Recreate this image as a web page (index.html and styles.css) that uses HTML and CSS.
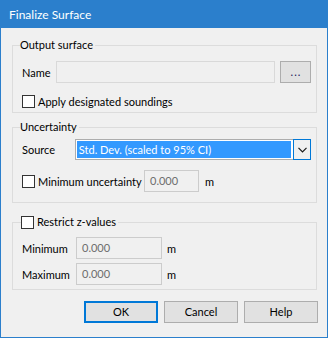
FILE: index.html
```html
<!DOCTYPE html>
<html>
<head>
<meta charset="utf-8">
<link rel="stylesheet" href="styles.css">
</head>
<body>
<div class="window">
  <div class="titlebar">Finalize Surface</div>
  <div class="content">
    <fieldset class="group group-output">
      <legend class="legend">Output surface</legend>
      <div class="row row-name">
        <span class="label label-name">Name</span>
        <div class="textbox textbox-name"></div>
        <div class="button button-browse">...</div>
      </div>
      <div class="row row-check">
        <span class="checkbox"></span>
        <span class="check-text">Apply designated soundings</span>
      </div>
    </fieldset>

    <fieldset class="group group-uncert">
      <legend class="legend">Uncertainty</legend>
      <div class="row row-source">
        <span class="label label-source">Source</span>
        <div class="combo">
          <div class="combo-text"><span class="combo-sel">Std. Dev. (scaled to 95% CI)</span></div>
          <div class="combo-btn">
            <svg width="9" height="6" viewBox="0 0 9 6"><path d="M0.5 0.8 L4.5 4.8 L8.5 0.8" fill="none" stroke="#1a1a1a" stroke-width="1.2"/></svg>
          </div>
        </div>
      </div>
      <div class="row row-minunc">
        <span class="checkbox"></span>
        <span class="check-text check-minunc">Minimum uncertainty</span>
        <div class="textbox textbox-num textbox-minunc">0.000</div>
        <span class="unit">m</span>
      </div>
    </fieldset>

    <fieldset class="group group-restrict">
      <legend class="legend legend-check">
        <span class="checkbox"></span>
        <span class="check-text">Restrict z-values</span>
      </legend>
      <div class="row row-z">
        <span class="label label-z">Minimum</span>
        <div class="textbox textbox-num textbox-z">0.000</div>
        <span class="unit unit-z">m</span>
      </div>
      <div class="row row-z row-z2">
        <span class="label label-z">Maximum</span>
        <div class="textbox textbox-num textbox-z">0.000</div>
        <span class="unit unit-z">m</span>
      </div>
    </fieldset>

    <div class="buttons">
      <div class="button button-main button-default">OK</div>
      <div class="button button-main">Cancel</div>
      <div class="button button-main">Help</div>
    </div>
  </div>
</div>
</body>
</html>
```

FILE: styles.css
```css
* { box-sizing: border-box; }
html, body { margin: 0; padding: 0; }
body {
  width: 328px;
  height: 338px;
  background: #f0f0f0;
  font-family: Lato, "Liberation Sans", sans-serif;
  font-size: 11px;
  color: #000;
  overflow: hidden;
}
.window {
  width: 328px;
  height: 338px;
  border: 1px solid #2b7fcc;
  border-top: 0;
  background: #f0f0f0;
}
.titlebar {
  height: 28px;
  margin: 0 -1px;
  background: #2b7fcc;
  color: #fff;
  font-size: 12px;
  line-height: 28px;
  padding-left: 9px;
  padding-top: 1px;
}
.content {
  padding: 0 10px 0 11px;
  display: flex;
  flex-direction: column;
}
.group {
  margin: 0;
  padding: 0 5px 0 9px;
  border: 1px solid #dcdcdc;
  min-width: 0;
}
.legend {
  padding: 0 2px 0 0;
  margin-left: -2px;
  line-height: 16px;
  height: 16px;
}
.group-output { margin-top: 9px; padding-top: 8px; padding-bottom: 3px; }
.group-uncert { margin-top: 6px; padding-top: 4px; padding-bottom: 10px; }
.group-restrict { margin-top: 11px; padding-top: 7px; padding-bottom: 4px; }

.row { display: flex; align-items: center; }
.row-name { height: 22px; }
.row-check { height: 16px; margin-top: 10px; }
.row-source { height: 21px; }
.row-minunc { height: 22px; margin-top: 10px; }
.row-z { height: 22px; }
.row-z2 { margin-top: 4px; }

.label { white-space: nowrap; }
.label-name { width: 34px; }
.label-source { width: 53px; }
.label-z { width: 54px; }

.textbox {
  height: 22px;
  border: 1px solid #d9d9d9;
  background: #f0f0f0;
}
.textbox-name { width: 219px; }
.textbox-num {
  border-color: #cccccc;
  color: #6d6d6d;
  line-height: 20px;
  padding-left: 5px;
}
.textbox-minunc { width: 55px; }
.textbox-z { width: 86px; }
.unit { margin-left: 6px; width: 15px; }
.unit-z { margin-left: 5px; }
.check-minunc { width: 106px; }

.button {
  background: #e1e1e1;
  border: 1px solid #adadad;
  text-align: center;
}
.button-browse {
  width: 31px;
  height: 22px;
  margin-left: 5px;
  line-height: 20px;
  color: #1a1a5a;
  letter-spacing: 1px;
  padding-left: 1px;
}

.checkbox {
  display: inline-block;
  width: 13px;
  height: 13px;
  border: 1px solid #333;
  background: #fff;
  flex: none;
}
.check-text { margin-left: 3px; white-space: nowrap; }
.legend-check { display: flex; align-items: center; margin-left: -1px; }

.combo {
  display: flex;
  width: 237px;
  height: 21px;
}
.combo-text {
  flex: 1;
  border: 1px solid #adadad;
  border-right: 0;
  padding: 1px;
  background: #fff;
  display: flex;
}
.combo-sel {
  flex: 1;
  background: #3399ff;
  color: #fff;
  line-height: 17px;
  padding-left: 2px;
  margin-right: 1px;
  white-space: nowrap;
}
.combo-btn {
  width: 18px;
  border: 1px solid #0078d7;
  background: #f0f0f0;
  display: flex;
  align-items: center;
  justify-content: center;
}

.buttons {
  display: flex;
  justify-content: flex-end;
  gap: 6px;
  margin-top: 11px;
  margin-right: -1px;
}
.button-main {
  width: 74px;
  height: 22px;
  line-height: 20px;
}
.button-default {
  border: 2px solid #0078d7;
  line-height: 18px;
}
```
